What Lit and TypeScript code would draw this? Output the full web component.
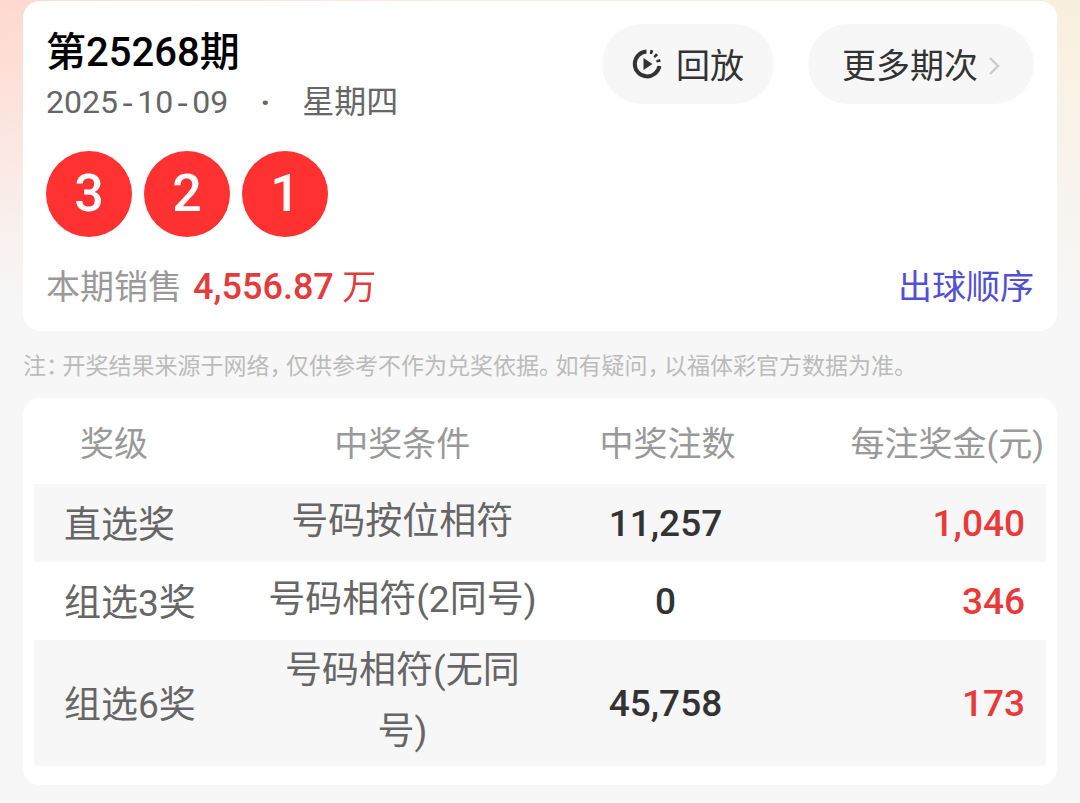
import { LitElement, html, css } from "lit";
import { customElement } from "lit/decorators.js";

interface Prize {
  level: string;
  rule: string;
  count: string;
  amount: string;
}

const PRIZES: Prize[] = [
  { level: "直选奖", rule: "号码按位相符", count: "11,257", amount: "1,040" },
  { level: "组选3奖", rule: "号码相符(2同号)", count: "0", amount: "346" },
  { level: "组选6奖", rule: "号码相符(无同号)", count: "45,758", amount: "173" },
];

const NOTE = "注：开奖结果来源于网络，仅供参考不作为兑奖依据。如有疑问，以福体彩官方数据为准。";

@customElement("draw-card")
export class DrawCard extends LitElement {
  static styles = css`
    :host {
      display: block;
      padding: 27px 23px 20px;
      border-radius: 17px;
      background: #fff;
    }
    .top {
      display: flex;
      justify-content: space-between;
      align-items: flex-start;
    }
    .issue {
      margin: 0;
      font-size: 40px;
      line-height: 50px;
      font-weight: 500;
      color: #000;
    }
    .date {
      display: flex;
      font-size: 32px;
      line-height: 48px;
      color: #666;
    }
    .dash {
      font-family: "Liberation Mono", monospace;
      line-height: 1;
    }
    .dot {
      width: 74px;
      font-weight: 700;
      text-align: center;
    }
    .actions {
      display: flex;
      gap: 34px;
      margin-top: -4px;
    }
    button {
      display: flex;
      align-items: center;
      height: 80px;
      border: 0;
      border-radius: 40px;
      background: #f7f7f7;
      color: #333;
      font-family: "Noto Sans CJK SC", sans-serif;
      font-size: 34px;
      line-height: 48px;
    }
    .replay {
      gap: 14px;
      padding: 0 30px;
    }
    .more {
      gap: 10px;
      padding: 0 34px;
    }
    .balls {
      display: flex;
      gap: 12px;
      margin: 25px 0 26px;
      padding: 0;
      list-style: none;
    }
    .ball {
      display: flex;
      align-items: center;
      justify-content: center;
      width: 86px;
      height: 86px;
      border-radius: 50%;
      background: #ff3131;
      color: #fff;
      font-size: 52px;
      line-height: 86px;
      font-weight: 500;
    }
    .bottom {
      display: flex;
      justify-content: space-between;
      font-size: 34px;
      line-height: 48px;
    }
    .sales {
      display: flex;
      gap: 11px;
      color: #999;
    }
    .value {
      color: #e23c3c;
    }
    .figure {
      font-size: 36px;
      line-height: 1;
      font-weight: 500;
    }
    a {
      color: #524fd3;
      text-decoration: none;
    }
  `;

  render() {
    return html`
      <div class="top">
        <div>
          <h1 class="issue">第25268期</h1>
          <div class="date">
            <span>2025<span class="dash">-</span>10<span class="dash">-</span>09</span>
            <span class="dot">·</span>
            <span>星期四</span>
          </div>
        </div>
        <div class="actions">
          <button class="replay" type="button">
            <svg width="30" height="30" viewBox="0 0 30 30" fill="none" aria-hidden="true">
              <path d="M14.5 2.6A12.4 12.4 0 1 0 27.4 17" stroke="#333" stroke-width="4" />
              <path d="M18.4 .8l2.9.8-1.2 3.7-2.4-.6zM24 4.2l2.2 2.1-3.2 2.7-1.7-1.8zM27.9 9.9l.9 2.9-4.1.7-.6-2.2z" fill="#333" />
              <path d="M11.5 9v12l9-6z" fill="#333" />
            </svg>
            <span>回放</span>
          </button>
          <button class="more" type="button">
            <span>更多期次</span>
            <svg width="12" height="22" viewBox="0 0 12 22" fill="none" aria-hidden="true">
              <path d="M2 5l8 8-8 8" stroke="#ccc" stroke-width="2.4" />
            </svg>
          </button>
        </div>
      </div>
      <ul class="balls">
        ${[3, 2, 1].map((n) => html`<li class="ball">${n}</li>`)}
      </ul>
      <div class="bottom">
        <div class="sales">
          <span>本期销售</span>
          <span class="value"><span class="figure">4,556.87</span> 万</span>
        </div>
        <a href="#order">出球顺序</a>
      </div>
    `;
  }
}

@customElement("prize-table")
export class PrizeTable extends LitElement {
  static styles = css`
    :host {
      display: block;
      padding: 0 11px 19px;
      border-radius: 17px;
      background: #fff;
    }
    table {
      width: 100%;
      table-layout: fixed;
      border-collapse: collapse;
    }
    th,
    td {
      box-sizing: border-box;
      padding: 0;
      text-align: center;
    }
    th {
      height: 86px;
      padding-top: 6px;
      font-size: 34px;
      line-height: 48px;
      font-weight: 400;
      color: #999;
    }
    td {
      height: 78px;
      font-size: 37px;
      line-height: 61px;
      color: #666;
    }
    tbody tr:nth-child(odd) {
      background: #f7f7f7;
    }
    .c-level {
      width: 22.8%;
    }
    .c-rule {
      width: 27.2%;
    }
    .c-count {
      width: 25.2%;
    }
    th.c-level {
      padding-left: 46px;
      text-align: left;
    }
    td.level {
      padding: 4px 0 0 30px;
      text-align: left;
    }
    td.rule {
      padding-bottom: 4px;
    }
    td.count {
      padding-right: 4px;
      font-weight: 500;
      color: #333;
    }
    th.c-amount {
      padding-right: 2px;
      text-align: right;
      white-space: nowrap;
    }
    td.amount {
      padding-right: 21px;
      text-align: right;
      font-weight: 500;
      color: #e83a3a;
    }
  `;

  render() {
    return html`
      <table>
        <thead>
          <tr>
            <th class="c-level" scope="col">奖级</th>
            <th class="c-rule" scope="col">中奖条件</th>
            <th class="c-count" scope="col">中奖注数</th>
            <th class="c-amount" scope="col">每注奖金(元)</th>
          </tr>
        </thead>
        <tbody>
          ${PRIZES.map(
            (p) => html`<tr>
              <td class="level">${p.level}</td>
              <td class="rule">${p.rule}</td>
              <td class="count">${p.count}</td>
              <td class="amount">${p.amount}</td>
            </tr>`
          )}
        </tbody>
      </table>
    `;
  }
}

@customElement("app-root")
export class AppRoot extends LitElement {
  static styles = css`
    :host {
      display: block;
      box-sizing: border-box;
      min-height: 100vh;
      padding: 1px 23px 17px;
      font-family: Roboto, "Noto Sans CJK SC", sans-serif;
      background:
        linear-gradient(to bottom, rgba(247, 247, 247, 0), #f7f7f7 300px),
        linear-gradient(to right, #ffd8ce, #f8f1ea, #f9efdd);
    }
    .note {
      margin: 0;
      padding: 20px 0 15px;
      font-size: 23px;
      line-height: 32px;
      color: #bbb;
    }
    .mark {
      padding-right: 5px;
      font-feature-settings: "halt";
    }
  `;

  render() {
    return html`
      <draw-card></draw-card>
      <p class="note">${NOTE.split(/([：，。])/).map((part, i) => (i % 2 ? html`<span class="mark">${part}</span>` : part))}</p>
      <prize-table></prize-table>
    `;
  }
}
